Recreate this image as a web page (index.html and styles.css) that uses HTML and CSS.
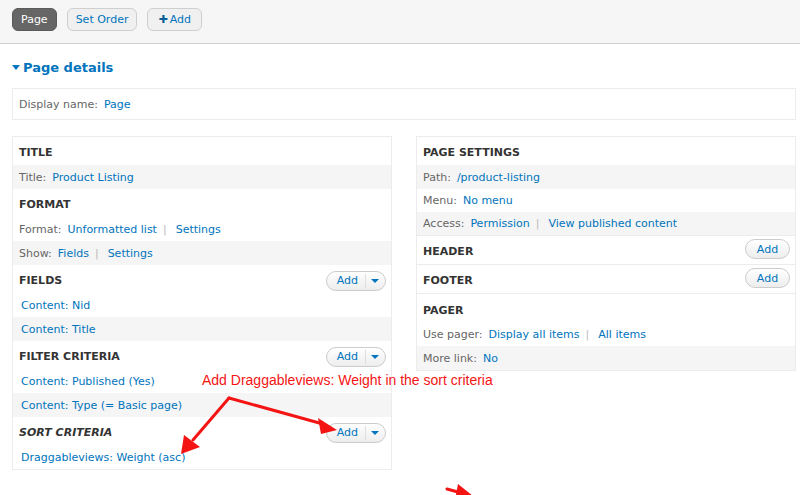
FILE: index.html
```html
<!DOCTYPE html>
<html>
<head>
<meta charset="utf-8">
<link rel="stylesheet" href="styles.css">
</head>
<body>
<div class="topbar">
  <span class="tab active">Page</span>
  <span class="tab">Set Order</span>
  <span class="tab add"><span class="plus">✚</span>Add</span>
</div>
<div class="main">
  <h2 class="details"><span class="tri"></span>Page details</h2>
  <div class="display"><span class="lbl">Display name:</span><a class="lnk">Page</a></div>
  <div class="columns">
    <div class="col">
      <div class="sec">
        <div class="hdr">TITLE</div>
        <div class="row alt"><span class="lbl">Title:</span><a class="lnk">Product Listing</a></div>
      </div>
      <div class="sec">
        <div class="hdr">FORMAT</div>
        <div class="row"><span class="lbl">Format:</span><a class="lnk">Unformatted list</a><span class="sep">|</span><a class="lnk2">Settings</a></div>
        <div class="row alt"><span class="lbl">Show:</span><a class="lnk">Fields</a><span class="sep">|</span><a class="lnk2">Settings</a></div>
      </div>
      <div class="sec">
        <div class="hdr">FIELDS<span class="dd"><span class="dd-main">Add</span><span class="dd-arrow"></span></span></div>
        <div class="row"><a class="lnk0">Content: Nid</a></div>
        <div class="row alt"><a class="lnk0">Content: Title</a></div>
      </div>
      <div class="sec">
        <div class="hdr">FILTER CRITERIA<span class="dd"><span class="dd-main">Add</span><span class="dd-arrow"></span></span></div>
        <div class="row"><a class="lnk0">Content: Published (Yes)</a></div>
        <div class="row alt"><a class="lnk0">Content: Type (= Basic page)</a></div>
      </div>
      <div class="sec">
        <div class="hdr italic">SORT CRITERIA<span class="dd"><span class="dd-main">Add</span><span class="dd-arrow"></span></span></div>
        <div class="row"><a class="lnk0">Draggableviews: Weight (asc)</a></div>
      </div>
    </div>
    <div class="col">
      <div class="sec">
        <div class="hdr">PAGE SETTINGS</div>
        <div class="row alt"><span class="lbl">Path:</span><a class="lnk">/product-listing</a></div>
        <div class="row short"><span class="lbl">Menu:</span><a class="lnk">No menu</a></div>
        <div class="row alt short"><span class="lbl">Access:</span><a class="lnk">Permission</a><span class="sep">|</span><a class="lnk2">View published content</a></div>
      </div>
      <div class="sec line">
        <div class="hdr tall">HEADER<span class="btn">Add</span></div>
      </div>
      <div class="sec line">
        <div class="hdr tall">FOOTER<span class="btn">Add</span></div>
      </div>
      <div class="sec line">
        <div class="hdr pager">PAGER</div>
        <div class="row"><span class="lbl">Use pager:</span><a class="lnk">Display all items</a><span class="sep">|</span><a class="lnk2">All items</a></div>
        <div class="row alt"><span class="lbl">More link:</span><a class="lnk">No</a></div>
      </div>
    </div>
  </div>
</div>
<div class="note">Add Draggableviews: Weight in the sort criteria</div>
<svg class="arrows" width="800" height="495" viewBox="0 0 800 495">
  <g stroke="#f41414" stroke-width="3" fill="none" stroke-linecap="round">
    <line x1="229" y1="398" x2="193" y2="440"/>
    <line x1="229" y1="398" x2="323" y2="424"/>
    <line x1="447" y1="489" x2="465" y2="494"/>
  </g>
  <g fill="#f41414">
    <polygon points="181,454 184,435 200,447"/>
    <polygon points="337,430 318,418 321,434"/>
    <polygon points="478,500 458,484 455,500"/>
  </g>
</svg>
</body>
</html>
```
FILE: styles.css
```css
html, body {
  margin: 0;
  padding: 0;
  background: #fff;
}
body {
  font-family: "DejaVu Sans", Verdana, sans-serif;
  font-size: 11px;
  color: #666;
  width: 800px;
  height: 495px;
  overflow: hidden;
  position: relative;
}
.topbar {
  height: 44px;
  background: #f6f6f6;
  border-bottom: 1px solid #d0d0d0;
  display: flex;
  align-items: flex-start;
  padding: 8px 0 0 12px;
  box-sizing: border-box;
  gap: 10px;
}
.tab {
  height: 23px;
  box-sizing: border-box;
  padding: 0 8px;
  border: 1px solid #cfcfcf;
  border-radius: 6px;
  background: #f0f0f0;
  color: #0074bd;
  font-size: 11px;
  display: flex;
  align-items: center;
}
.tab.add {
  padding: 0 10px 0 10px;
}
.tab.active {
  background: #666;
  border-color: #5a5a5a;
  color: #fff;
}
.plus {
  font-size: 11px;
  color: #0b5e9a;
  margin-right: 2px;
}
.main {
  padding: 0 4px 0 12px;
}
.details {
  margin: 0 0 7px 0;
  padding-top: 9px;
  height: 28px;
  font-size: 13px;
  font-weight: bold;
  color: #0074bd;
  display: flex;
  align-items: center;
}
.tri {
  width: 0;
  height: 0;
  border-left: 4px solid transparent;
  border-right: 4px solid transparent;
  border-top: 5px solid #0074bd;
  margin-right: 3px;
}
.display {
  height: 32px;
  box-sizing: border-box;
  border: 1px solid #ececec;
  display: flex;
  align-items: center;
  padding-left: 6px;
}
.columns {
  display: flex;
  gap: 24px;
  margin-top: 16px;
  align-items: flex-start;
}
.col {
  width: 380px;
  border: 1px solid #ececec;
  box-sizing: border-box;
}
.sec.line {
  border-top: 1px solid #ececec;
}
.hdr {
  height: 28px;
  box-sizing: border-box;
  padding: 9px 6px 0 6px;
  font-weight: bold;
  color: #333;
  font-size: 11px;
  position: relative;
}
.hdr.tall {
  height: 28px;
}
.hdr.pager {
  padding-top: 10px;
}
.hdr.italic {
  font-style: italic;
}
.row {
  height: 24px;
  display: flex;
  align-items: center;
  padding: 0 6px;
}
.row.short {
  height: 23px;
}
.row.alt {
  background: #f5f5f5;
}
.lbl {
  color: #666;
}
.lnk, .lnk2, .lnk0 {
  color: #0074bd;
}
.lnk {
  margin-left: 6px;
}
.lnk0 {
  margin-left: 2px;
}
.sep {
  color: #bbb;
  margin: 0 9px 0 6px;
}
.dd {
  position: absolute;
  right: 5px;
  top: 6px;
  height: 20px;
  box-sizing: border-box;
  border: 1px solid #ccc;
  border-radius: 10px;
  background: linear-gradient(#ffffff, #ededed);
  display: flex;
  align-items: center;
  font-weight: normal;
  font-style: normal;
}
.dd-main {
  color: #0074bd;
  padding: 0 7px 0 10px;
  border-right: 1px solid #ddd;
  line-height: 14px;
}
.dd-arrow {
  width: 0;
  height: 0;
  border-left: 4px solid transparent;
  border-right: 4px solid transparent;
  border-top: 4px solid #0074bd;
  margin: 0 6px 0 5px;
}
.btn {
  position: absolute;
  right: 5px;
  top: 3px;
  height: 20px;
  width: 45px;
  box-sizing: border-box;
  border: 1px solid #ccc;
  border-radius: 10px;
  background: linear-gradient(#ffffff, #ededed);
  color: #0074bd;
  font-weight: normal;
  display: flex;
  align-items: center;
  justify-content: center;
}
.note {
  position: absolute;
  left: 202px;
  top: 372px;
  font-family: "Liberation Sans", Arial, sans-serif;
  font-size: 14px;
  color: #f41414;
  white-space: nowrap;
}
.arrows {
  position: absolute;
  left: 0;
  top: 0;
  pointer-events: none;
}
```
